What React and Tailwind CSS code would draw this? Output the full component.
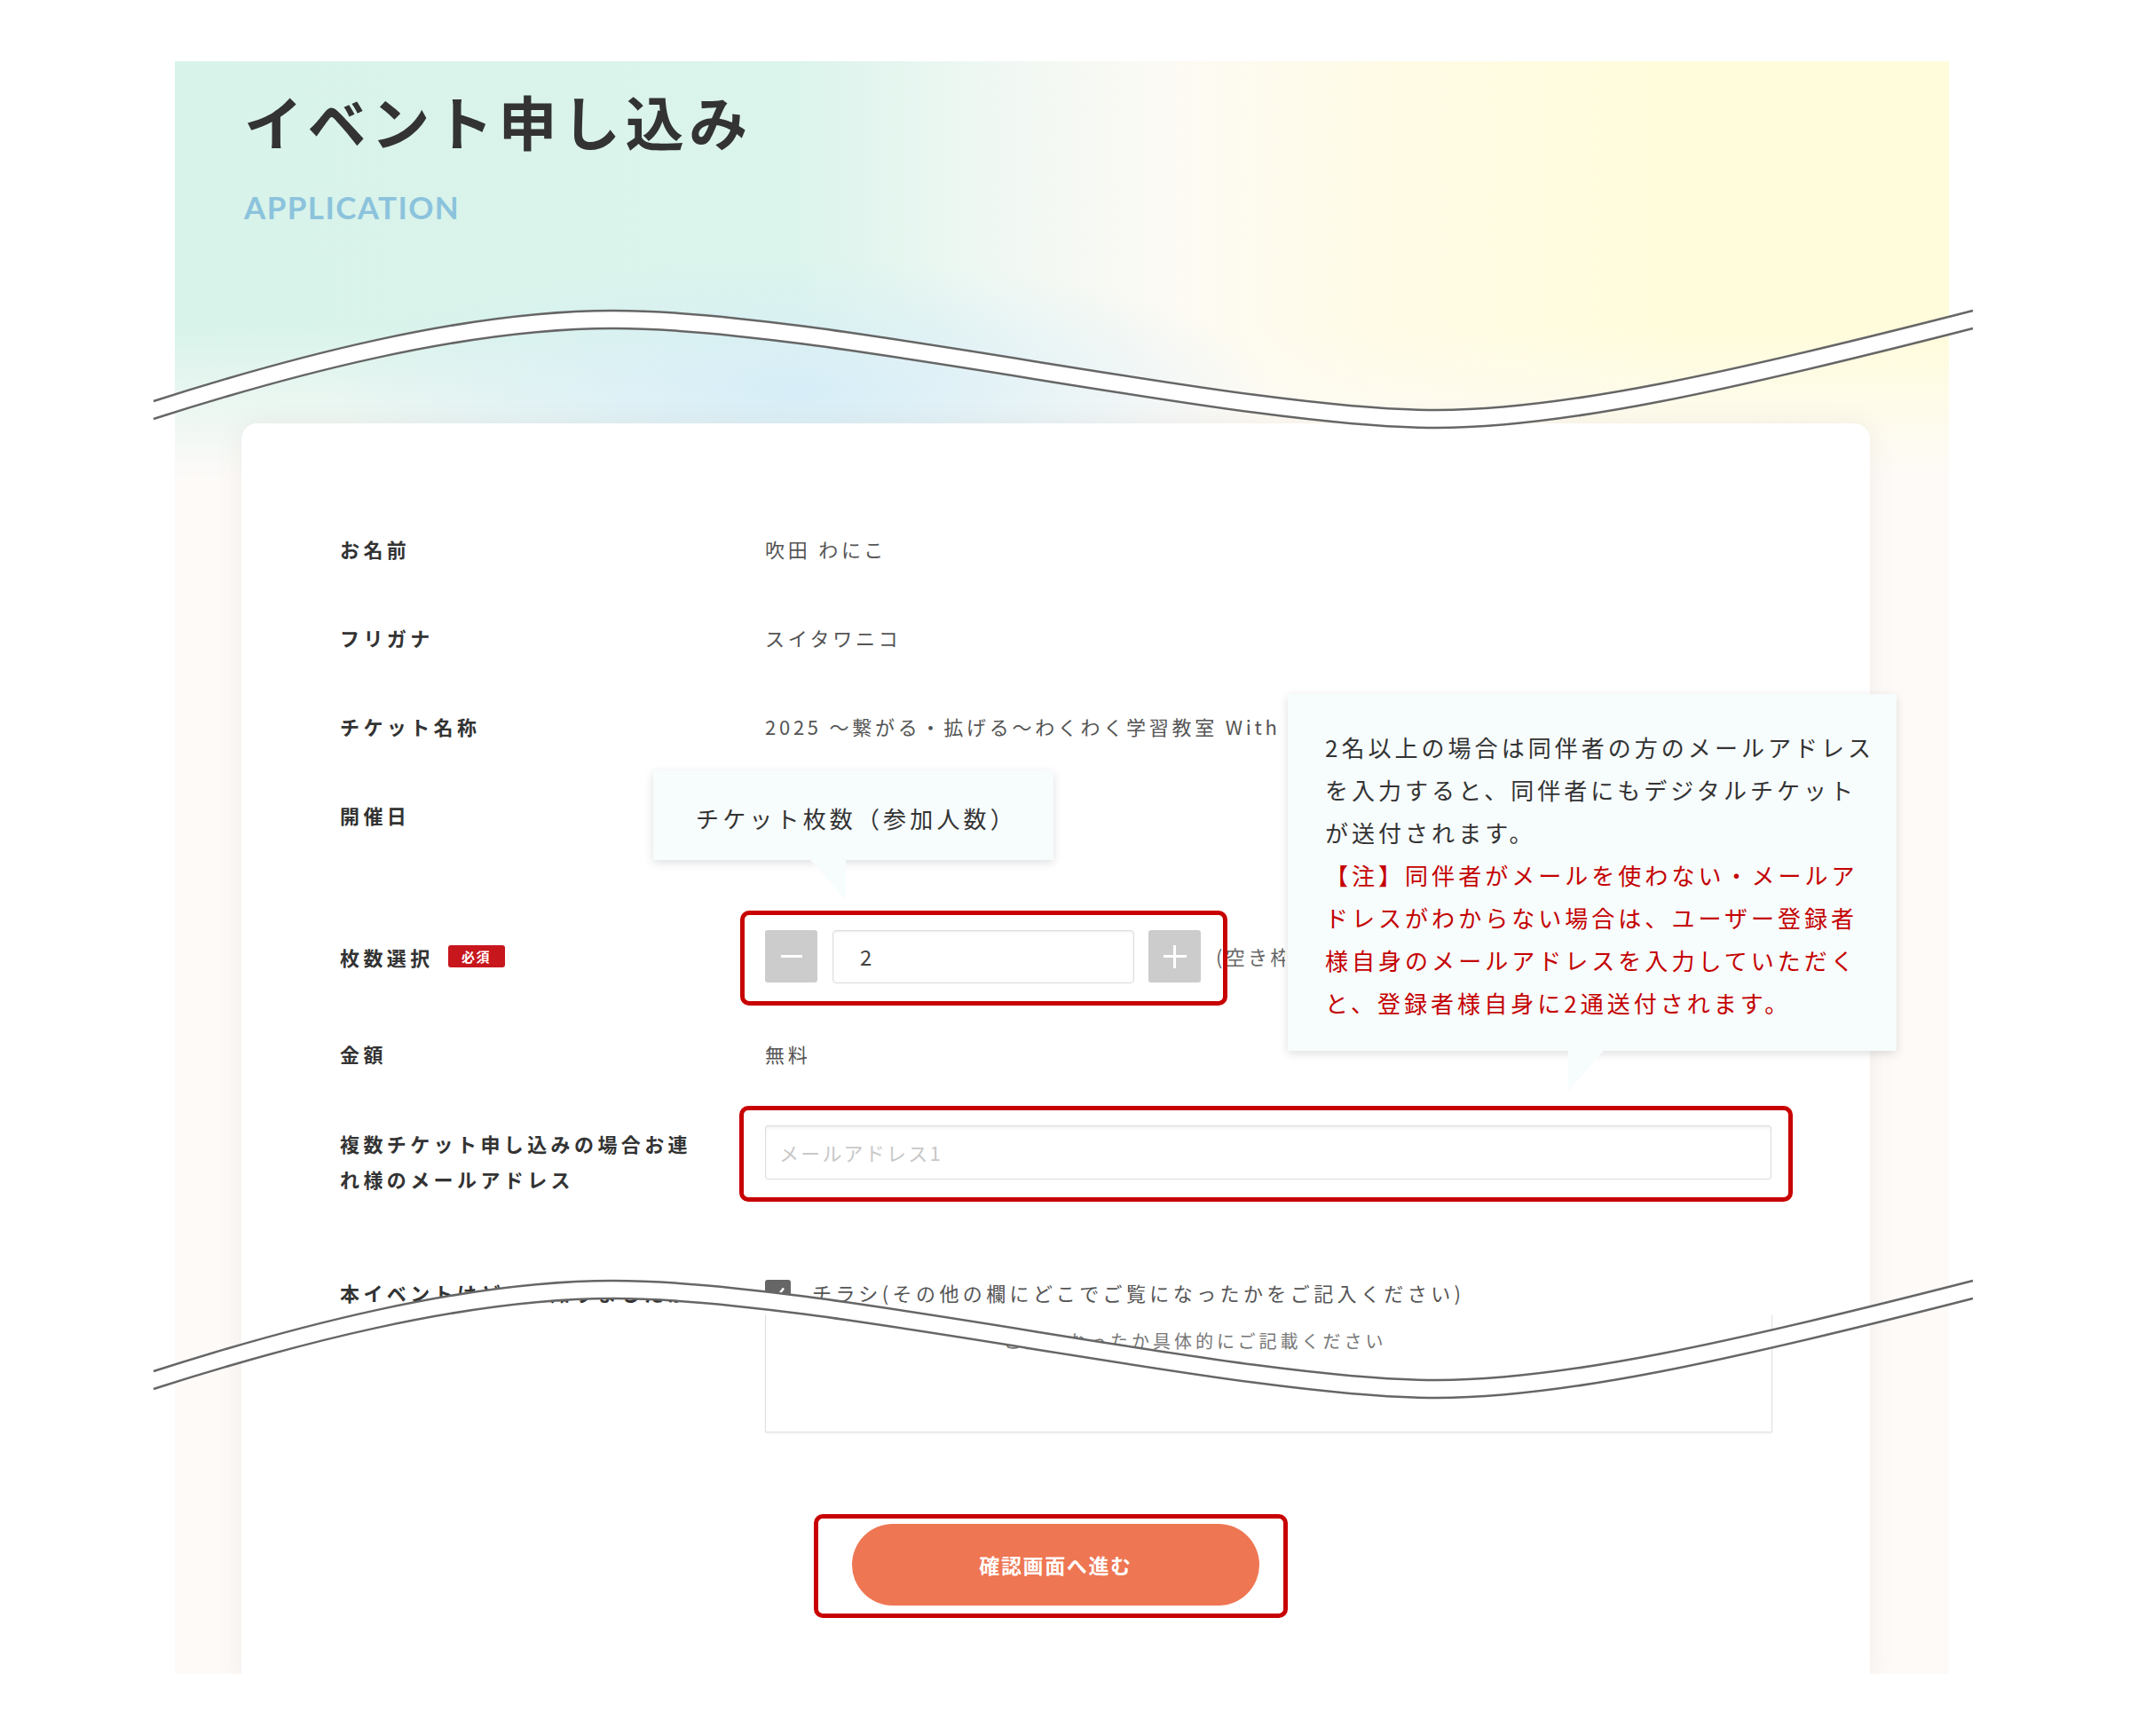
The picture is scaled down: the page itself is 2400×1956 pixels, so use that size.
import React from 'react';

const label = 'shrink-0 w-[479px] text-[22px] font-bold tracking-[0.2em] text-[#333] leading-[40px] whitespace-nowrap';
const value = 'text-[22px] tracking-[0.17em] text-[#555] leading-[40px] whitespace-nowrap';

// annotation frame drawn over a control
function RedFrame({ className }) {
  return <div className={`absolute border-[5px] border-[#c80000] rounded-[10px] pointer-events-none ${className}`} />;
}

function Row({ title, children, className = '' }) {
  return (
    <div className={`flex items-center h-[40px] ${className}`}>
      <div className={label}>{title}</div>
      <div className={value}>{children}</div>
    </div>
  );
}

const upper = 'M173 452 C320 405 520 350 691 350 C930 350 1390 462 1619 462 C1760 462 1950 420 2223 350';
const lower = 'M173 472 C320 425 520 370 691 370 C930 370 1390 482 1619 482 C1760 482 1950 440 2223 370';
const band =
  'M173 452 C320 405 520 350 691 350 C930 350 1390 462 1619 462 C1760 462 1950 420 2223 350 L2223 370 C1950 440 1760 482 1619 482 C1390 482 930 370 691 370 C520 370 320 425 173 472 Z';

function Cut({ dy }) {
  return (
    <g transform={`translate(0 ${dy})`}>
      <path d={band} fill="#ffffff" />
      <path d={upper} fill="none" stroke="#666" strokeWidth="2.5" />
      <path d={lower} fill="none" stroke="#666" strokeWidth="2.5" />
    </g>
  );
}

export default function App() {
  return (
    <div className="relative w-[2400px] h-[1956px] bg-white overflow-hidden font-['Noto_Sans_CJK_JP',sans-serif]">
      <div className="relative ml-[197px] pt-[69px] w-[1999px]">
        <div className="h-[1817px] overflow-hidden bg-[radial-gradient(ellipse_540px_150px_at_700px_372px,rgba(214,237,248,0.95),rgba(214,237,248,0)),linear-gradient(to_bottom,rgba(253,250,248,0)_0px,rgba(253,250,248,0)_300px,#fdfaf8_470px),linear-gradient(to_right,#d8f3ea_0%,#dbf4ec_35%,#f1f8f3_47%,#fcfaf4_56%,#fffbe6_68%,#fffcdb_85%,#fffcdb_100%)]">
          {/* Header */}
          <div className="pl-[78px] pt-[33px]">
            <h1 className="text-[66px] leading-none font-bold tracking-[0.085em] text-[#333]">イベント申し込み</h1>
            <p className="mt-[48px] text-[35px] leading-none font-bold tracking-[0.04em] text-[#8cc3dc] font-['Lato',sans-serif]">
              APPLICATION
            </p>
          </div>

          {/* Card */}
          <div className="relative mt-[226px] ml-[75px] w-[1835px] h-[1420px] bg-white rounded-t-[18px] shadow-[0_0_28px_rgba(120,100,90,0.09)]">
            <div className="pl-[111px] pt-[121px]">
              <Row title="お名前">吹田 わにこ</Row>
              <Row title="フリガナ" className="mt-[60px]">スイタワニコ</Row>
              <Row title="チケット名称" className="mt-[60px]">2025 〜繋がる・拡げる〜わくわく学習教室 With</Row>
              <Row title="開催日" className="mt-[60px]"></Row>

              {/* 枚数選択 */}
              <div className="mt-[110px] flex items-center h-[59px]">
                <div className="shrink-0 w-[479px] flex items-center">
                  <span className="text-[22px] font-bold tracking-[0.2em] text-[#333] leading-[40px]">枚数選択</span>
                  <span className="ml-[16px] w-[64px] h-[25px] rounded-[3px] bg-[#c8161d] text-white text-[15px] font-bold tracking-[0.1em] flex items-center justify-center leading-none">
                    必須
                  </span>
                </div>
                <div className="relative flex items-center">
                  <RedFrame className="-left-[28px] -right-[30px] -top-[22px] -bottom-[25px]" />
                  <div className="w-[59px] h-[59px] rounded-[3px] bg-[#cccccc] flex items-center justify-center">
                    <div className="w-[24px] h-[3px] bg-white" />
                  </div>
                  <div className="ml-[17px] w-[340px] h-[60px] rounded-[4px] border border-[#dcdcdc] bg-white shadow-[inset_0_1px_3px_rgba(0,0,0,0.08)] flex items-center pl-[30px] text-[24px] text-[#444]">
                    2
                  </div>
                  <div className="relative ml-[16px] w-[59px] h-[59px] rounded-[3px] bg-[#cccccc] flex items-center justify-center">
                    <div className="absolute w-[26px] h-[3px] bg-white" />
                    <div className="absolute w-[3px] h-[26px] bg-white" />
                  </div>
                </div>
                <div className="ml-[17px] w-[78px] overflow-hidden">
                  <span className="text-[22px] tracking-[0.15em] text-[#666] whitespace-nowrap">(空き枠</span>
                </div>
              </div>

              <Row title="金額" className="mt-[60px]">無料</Row>

              {/* メールアドレス */}
              <div className="mt-[61px] flex items-start">
                <div className={label}>
                  複数チケット申し込みの場合お連
                  <br />
                  れ様のメールアドレス
                </div>
                <div className="relative">
                  <RedFrame className="-left-[29px] -right-[24px] -top-[22px] -bottom-[25px]" />
                  <div className="w-[1134px] h-[61px] border border-[#dcdcdc] rounded-[3px] bg-white shadow-[inset_0_2px_3px_rgba(0,0,0,0.06)] flex items-center pl-[15px] text-[22px] tracking-[0.1em] text-[#c8c8c8]">
                    メールアドレス1
                  </div>
                </div>
              </div>

              {/* 本イベントは */}
              <div className="mt-[88px] flex items-start">
                <div className={label}>本イベントはどこで知りましたか</div>
                <div className="flex flex-col">
                  <div className="flex items-center h-[40px]">
                    <div className="w-[29px] h-[29px] rounded-[3px] bg-[#666] flex items-center justify-center">
                      <svg width="20" height="20" viewBox="0 0 20 20">
                        <path d="M4 10.5 L8.5 15 L16 5.5" fill="none" stroke="#fff" strokeWidth="2.6" />
                      </svg>
                    </div>
                    <span className="ml-[24px] text-[22px] tracking-[0.2em] text-[#555] whitespace-nowrap">
                      チラシ(その他の欄にどこでご覧になったかをご記入ください)
                    </span>
                  </div>
                  <div className="mt-[5px] w-[1135px] h-[133px] border border-[#e0e0e0] border-t-transparent shadow-[0_2px_2px_rgba(0,0,0,0.04)] pt-[14px] pl-[268px] text-[20px] leading-[30px] tracking-[0.2em] text-[#777] whitespace-nowrap">
                    ご覧になったか具体的にご記載ください
                  </div>
                </div>
              </div>
            </div>

            {/* Submit */}
            <div className="mt-[103px] flex justify-center">
              <div className="relative">
                <RedFrame className="-left-[43px] -right-[32px] -top-[11px] -bottom-[14px]" />
                <button className="w-[459px] h-[92px] rounded-full bg-[#ee7653] text-white text-[23px] font-bold tracking-[0.07em]">
                  確認画面へ進む
                </button>
              </div>
            </div>

            {/* Tooltip: ticket count */}
            <div className="absolute left-[464px] top-[391px] w-[451px] h-[101px] bg-[#f7fcfd] shadow-[0_3px_10px_rgba(0,0,0,0.13)] flex items-center pl-[48px] pt-[6px]">
              <span className="text-[26px] tracking-[0.16em] text-[#333] whitespace-nowrap">チケット枚数（参加人数）</span>
              <div className="absolute left-[177px] top-[101px] w-[40px] h-[45px] bg-[#f7fcfd] [clip-path:polygon(0_0,100%_0,100%_100%)]" />
            </div>

            {/* Tooltip: companion mail */}
            <div className="absolute left-[1179px] top-[305px] w-[686px] h-[402px] bg-[#f7fcfd] shadow-[0_3px_10px_rgba(0,0,0,0.13)] pl-[42px] pt-[36px] text-[26px] leading-[48px] tracking-[0.155em] whitespace-nowrap">
              <div className="text-[#333]">2名以上の場合は同伴者の方のメールアドレス</div>
              <div className="text-[#333]">を入力すると、同伴者にもデジタルチケット</div>
              <div className="text-[#333]">が送付されます。</div>
              <div className="text-[#c40000]">【注】同伴者がメールを使わない・メールア</div>
              <div className="text-[#c40000]">ドレスがわからない場合は、ユーザー登録者</div>
              <div className="text-[#c40000]">様自身のメールアドレスを入力していただく</div>
              <div className="text-[#c40000]">と、登録者様自身に2通送付されます。</div>
              <div className="absolute left-[316px] top-[402px] w-[40px] h-[46px] bg-[#f7fcfd] [clip-path:polygon(0_0,100%_0,0_100%)]" />
            </div>
          </div>
        </div>
      </div>

      {/* cut marks */}
      <svg className="absolute left-0 top-0 pointer-events-none" width="2400" height="1956" viewBox="0 0 2400 1956">
        <Cut dy={0} />
        <Cut dy={1093} />
      </svg>
    </div>
  );
}
